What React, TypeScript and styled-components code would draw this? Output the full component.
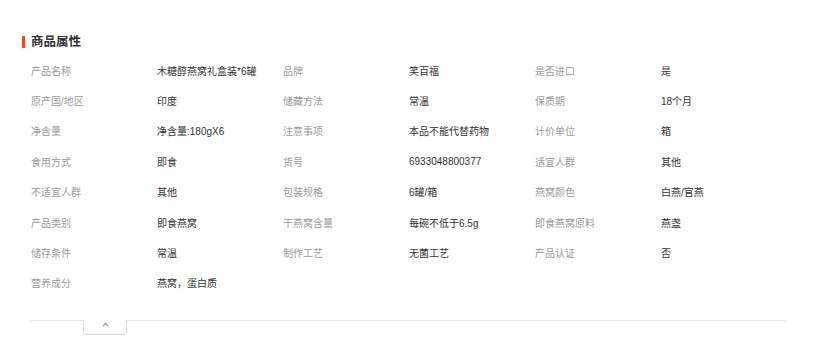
import styled, { createGlobalStyle } from "styled-components";

const GlobalStyle = createGlobalStyle`
  body {
    margin: 0;
    background: #fff;
    font-family: "Liberation Sans", "Noto Sans CJK SC", sans-serif;
  }
`;

const attrs: [string, string][] = [
  ["产品名称", "木糖醇燕窝礼盒装*6罐"],
  ["品牌", "笑百福"],
  ["是否进口", "是"],
  ["原产国/地区", "印度"],
  ["储藏方法", "常温"],
  ["保质期", "18个月"],
  ["净含量", "净含量:180gX6"],
  ["注意事项", "本品不能代替药物"],
  ["计价单位", "箱"],
  ["食用方式", "即食"],
  ["货号", "6933048800377"],
  ["适宜人群", "其他"],
  ["不适宜人群", "其他"],
  ["包装规格", "6罐/箱"],
  ["燕窝颜色", "白燕/官燕"],
  ["产品类别", "即食燕窝"],
  ["干燕窝含量", "每碗不低于6.5g"],
  ["即食燕窝原料", "燕盏"],
  ["储存条件", "常温"],
  ["制作工艺", "无菌工艺"],
  ["产品认证", "否"],
  ["营养成分", "燕窝，蛋白质"],
];

export default function App() {
  return (
    <>
      <GlobalStyle />
      <Section>
        <Header>
          <Bar />
          <Title>商品属性</Title>
        </Header>

        <AttrGrid>
          {attrs.map(([label, value]) => (
            <Pair key={label}>
              <Label>{label}</Label>
              <Value>{value}</Value>
            </Pair>
          ))}
        </AttrGrid>

        <Footer>
          <Toggle>
            <svg width="7" height="5" viewBox="0 0 7 5">
              <polyline points="1,4 3.5,1.3 6,4" fill="none" stroke="#8a8a8a" strokeWidth="1.1" />
            </svg>
          </Toggle>
        </Footer>
      </Section>
    </>
  );
}

const Section = styled.div`
  padding: 35px 0 0 22px;
`;

const Header = styled.div`
  display: flex;
  align-items: center;
  height: 13px;
`;

const Bar = styled.span`
  width: 3px;
  height: 12px;
  background: #ff4a00;
`;

const Title = styled.h3`
  margin: 0 0 0 6px;
  font-size: 12.5px;
  line-height: 13px;
  font-weight: bold;
  color: #333;
  position: relative;
  top: 1px;
`;

const AttrGrid = styled.div`
  display: grid;
  grid-template-columns: repeat(3, 252px);
  grid-auto-rows: 30.4px;
  margin: 7px 0 0 9px;
  width: 756px;
`;

const Pair = styled.div`
  display: grid;
  grid-template-columns: 126px 126px;
  align-items: center;
  font-size: 10px;
`;

const Label = styled.span`
  color: #9a9a9a;
`;

const Value = styled.span`
  color: #333;
`;

const Footer = styled.div`
  margin: 22px 0 0 9px;
  width: 754px;
  border-top: 1px solid #e6e6e6;
  height: 16px;
`;

const Toggle = styled.div`
  margin: -1px 0 0 52px;
  width: 42px;
  height: 12px;
  background: #fff;
  border: 1px solid #dcdcdc;
  border-top: none;
  border-radius: 0 0 4px 4px;
  display: flex;
  justify-content: center;
  padding-top: 2px;
  box-sizing: content-box;
`;
